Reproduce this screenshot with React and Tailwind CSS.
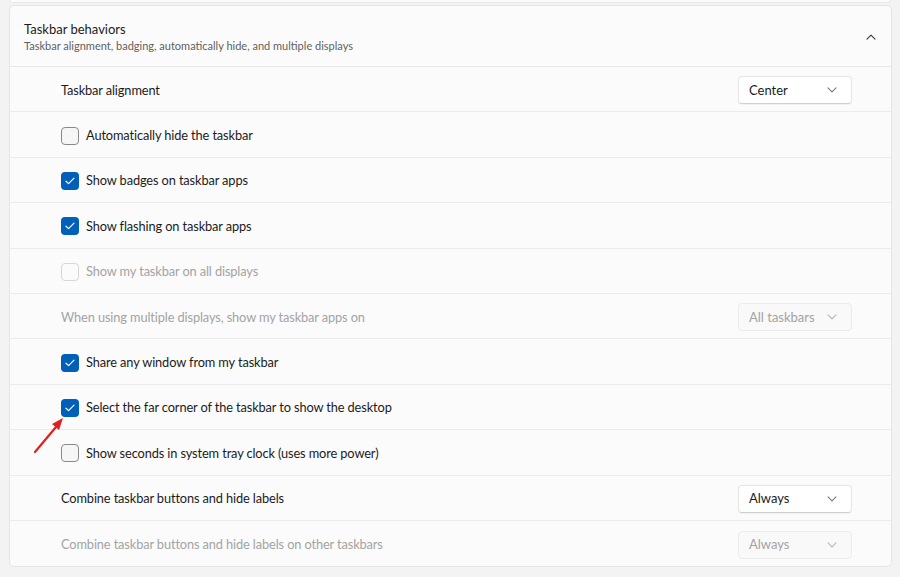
import React from "react";

const font = { fontFamily: 'Lato, "Noto Sans", sans-serif' };

function Chevron({ up = false, className = "" }) {
  return (
    <svg width="10" height="6" viewBox="0 0 10 6" className={className} fill="none">
      {up ? (
        <path d="M1 5.2 L5 1.2 L9 5.2" stroke="currentColor" strokeWidth="1.1" strokeLinecap="round" strokeLinejoin="round" />
      ) : (
        <path d="M1 0.8 L5 4.8 L9 0.8" stroke="currentColor" strokeWidth="1.1" strokeLinecap="round" strokeLinejoin="round" />
      )}
    </svg>
  );
}

function Checkbox({ checked, disabled }) {
  if (checked) {
    return (
      <div className="w-[18px] h-[18px] rounded-[4px] bg-[#005fb8] flex items-center justify-center shrink-0">
        <svg width="10" height="8" viewBox="0 0 10 8" fill="none">
          <path d="M1 4.2 L3.6 6.6 L9 1.2" stroke="white" strokeWidth="1.2" strokeLinecap="round" strokeLinejoin="round" />
        </svg>
      </div>
    );
  }
  return (
    <div
      className={
        "w-[18px] h-[18px] rounded-[4px] border shrink-0 " +
        (disabled ? "border-[#d6d6d6] bg-[#fbfbfb]" : "border-[#8a8a8a] bg-[#f6f6f6]")
      }
    />
  );
}

function Dropdown({ label, disabled }) {
  return (
    <div
      className={
        "w-[114px] h-[28px] rounded-[4px] flex items-center justify-between pl-[10px] pr-[14px] text-[13px] " +
        (disabled
          ? "bg-[#f9f9f9] border border-[#ececec] text-[#a3a3a3]"
          : "bg-white border border-[#e5e5e5] border-b-[#d0d0d0] text-[#1b1b1b] shadow-[0_1px_1px_rgba(0,0,0,0.04)]")
      }
    >
      <span className="pt-[1px]">{label}</span>
      <Chevron className={disabled ? "text-[#b5b5b5]" : "text-[#7a7a7a]"} />
    </div>
  );
}

function Row({ children, right, last }) {
  return (
    <div
      className={
        "h-[45.4px] flex items-center justify-between pl-[51px] pr-[39px] pt-[2px] " +
        (last ? "" : "border-b border-[#ebebeb]")
      }
    >
      {children}
      {right}
    </div>
  );
}

const txt = "text-[12.8px] tracking-[-0.12px]";

function CheckRow({ label, checked, disabled }) {
  return (
    <Row>
      <div className="flex items-center gap-[7px]">
        <Checkbox checked={checked} disabled={disabled} />
        <span className={txt + " " + (disabled ? "text-[#a3a3a3]" : "text-[#1b1b1b]")}>{label}</span>
      </div>
    </Row>
  );
}

export default function App() {
  return (
    <div className="w-[900px] h-[577px] bg-[#f3f3f3] overflow-hidden relative" style={font}>
      <div className="mx-[9px] h-[3px] bg-[#fbfbfb] border-x border-b border-[#e8e8e8] rounded-b-[4px]" />
      <div className="mx-[9px] mt-[2px] w-[883px] bg-[#fbfbfb] border border-[#e5e5e5] rounded-[5px]">
        <div className="h-[61px] flex items-center justify-between pl-[14px] pr-[15px] pt-[1px] border-b border-[#e8e8e8]">
          <div className="flex flex-col">
            <span className="text-[13px] leading-[18px] text-[#1b1b1b]">Taskbar behaviors</span>
            <span className="text-[11px] leading-[15px] text-[#5f5f5f]">
              Taskbar alignment, badging, automatically hide, and multiple displays
            </span>
          </div>
          <Chevron up className="text-[#3a3a3a]" />
        </div>
        <Row right={<Dropdown label="Center" />}>
          <span className={txt + " text-[#1b1b1b]"}>Taskbar alignment</span>
        </Row>
        <CheckRow label="Automatically hide the taskbar" />
        <CheckRow label="Show badges on taskbar apps" checked />
        <CheckRow label="Show flashing on taskbar apps" checked />
        <CheckRow label="Show my taskbar on all displays" disabled />
        <Row right={<Dropdown label="All taskbars" disabled />}>
          <span className={txt + " text-[#a3a3a3]"}>When using multiple displays, show my taskbar apps on</span>
        </Row>
        <CheckRow label="Share any window from my taskbar" checked />
        <CheckRow label="Select the far corner of the taskbar to show the desktop" checked />
        <CheckRow label="Show seconds in system tray clock (uses more power)" />
        <Row right={<Dropdown label="Always" />}>
          <span className={txt + " text-[#1b1b1b]"}>Combine taskbar buttons and hide labels</span>
        </Row>
        <Row right={<Dropdown label="Always" disabled />} last>
          <span className={txt + " text-[#a3a3a3]"}>Combine taskbar buttons and hide labels on other taskbars</span>
        </Row>
      </div>
      <svg className="absolute left-0 top-0 pointer-events-none" width="900" height="577">
        <line x1="35" y1="452" x2="56" y2="427" stroke="#e0201c" strokeWidth="2.2" strokeLinecap="round" />
        <polygon points="63,418 52,424 59,430" fill="#e0201c" />
      </svg>
    </div>
  );
}
